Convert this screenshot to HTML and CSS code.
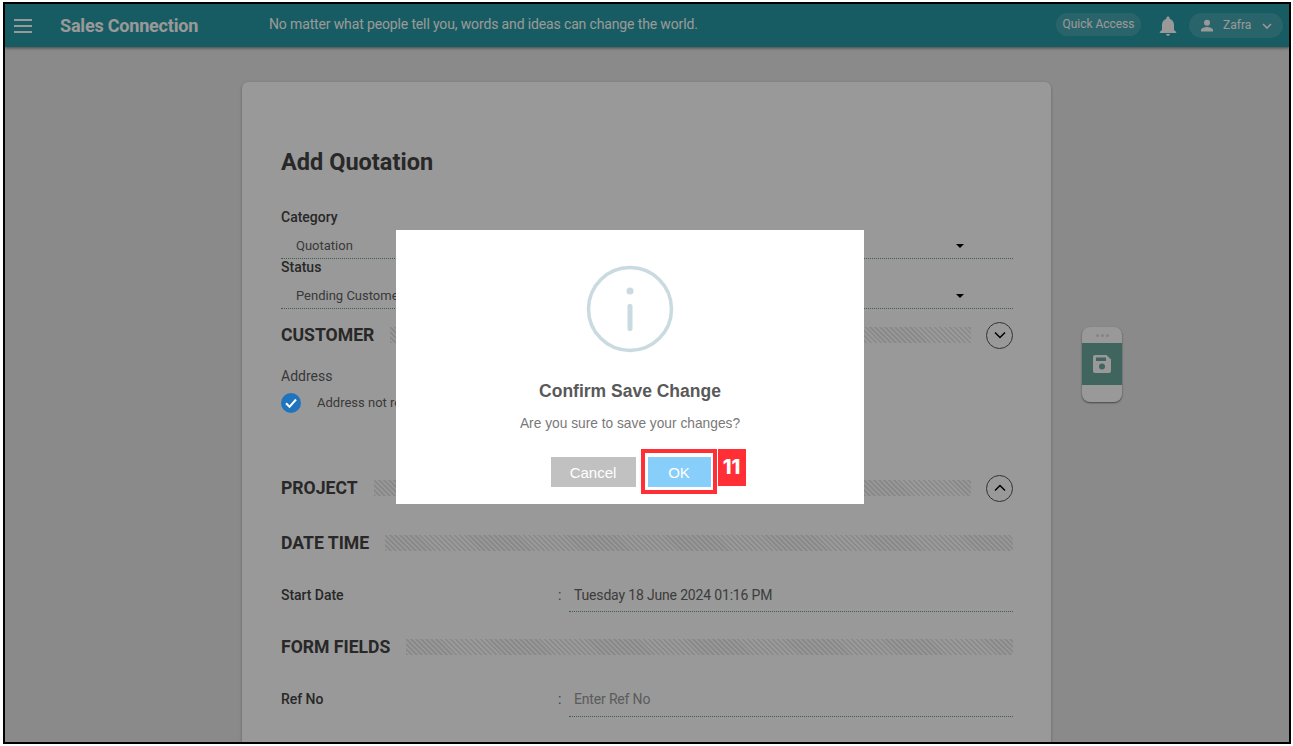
FILE: index.html
```html
<!DOCTYPE html>
<html lang="en">
<head>
<meta charset="utf-8">
<title>Add Quotation</title>
<link rel="stylesheet" href="styles.css">
</head>
<body>
<div class="frame">
  <header class="topbar">
    <svg class="menu-icon" width="18" height="14" viewBox="0 0 18 14"><path d="M0 1h18M0 7h18M0 13h18" stroke="#fff" stroke-width="2"/></svg>
    <div class="brand">Sales Connection</div>
    <div class="tagline">No matter what people tell you, words and ideas can change the world.</div>
    <div class="quick">Quick Access</div>
    <svg class="bell" width="18" height="20" viewBox="0 0 18 20"><path d="M9 0.5c-1 0-1.6.7-1.6 1.6v.6C4.700 3.500 3 5.900 3 8.700v5L.8 15.900V17h16.400v-1.100L15 13.700v-5c0-2.800-1.700-5.200-4.400-6v-.6C10.600 1.200 10 .5 9 .5zM7 18c0 1 .9 1.800 2 1.800s2-.8 2-1.800z" fill="#fff"/></svg>
    <div class="user">
      <svg width="14" height="14" viewBox="0 0 14 14"><circle cx="7" cy="3.800" r="3" fill="#fff"/><path d="M1 12.500v-1.400c0-2 4-3 6-3s6 1 6 3v1.400z" fill="#fff"/></svg>
      <span class="user-name">Zafra</span>
      <svg width="10" height="6" viewBox="0 0 10 6"><path d="M1 1l4 4 4-4" fill="none" stroke="#fff" stroke-width="1.600"/></svg>
    </div>
  </header>

  <main class="content">
    <section class="card">
      <h1 class="title">Add Quotation</h1>

      <div class="field-label">Category</div>
      <div class="select"><span>Quotation</span><i class="caret"></i></div>
      <div class="field-label">Status</div>
      <div class="select"><span>Pending Customer</span><i class="caret"></i></div>

      <div class="section sec-customer">
        <h2>CUSTOMER</h2><div class="hatch"></div>
        <div class="circle-btn"><svg width="12" height="8" viewBox="0 0 12 8"><path d="M1 1.500l5 5 5-5" fill="none" stroke="#000" stroke-width="1.500"/></svg></div>
      </div>
      <div class="address-label">Address</div>
      <div class="address-row">
        <svg class="check" width="20" height="20" viewBox="0 0 20 20"><circle cx="10" cy="10" r="10" fill="#1f74bd"/><path d="M5 10.300l3.500 3.500L15 6.500" fill="none" stroke="#fff" stroke-width="2"/></svg>
        <span class="address-text">Address not required</span>
      </div>

      <div class="section sec-project">
        <h2>PROJECT</h2><div class="hatch"></div>
        <div class="circle-btn"><svg width="12" height="8" viewBox="0 0 12 8"><path d="M1 6.500l5-5 5 5" fill="none" stroke="#000" stroke-width="1.500"/></svg></div>
      </div>
      <div class="section sec-date">
        <h2>DATE TIME</h2><div class="hatch"></div>
      </div>
      <div class="row row-date">
        <div class="row-label">Start Date</div><div class="colon">:</div>
        <div class="row-value">Tuesday 18 June 2024 01:16 PM</div>
      </div>
      <div class="section sec-form">
        <h2>FORM FIELDS</h2><div class="hatch"></div>
      </div>
      <div class="row row-ref">
        <div class="row-label">Ref No</div><div class="colon">:</div>
        <div class="row-value placeholder">Enter Ref No</div>
      </div>
    </section>

    <aside class="save-widget">
      <div class="dots"><i></i><i></i><i></i></div>
      <div class="save-band">
        <svg width="20" height="20" viewBox="0 0 20 20"><path d="M3 1h11.500L19 5.500V17a2 2 0 0 1-2 2H3a2 2 0 0 1-2-2V3a2 2 0 0 1 2-2z" fill="#fff"/><rect x="4" y="3.500" width="10" height="3.500" fill="#6ca89e"/><circle cx="10" cy="12.500" r="3" fill="#6ca89e"/></svg>
      </div>
    </aside>
  </main>

  <div class="overlay">
    <div class="dialog">
      <svg class="info" width="88" height="88" viewBox="0 0 88 88"><circle cx="44" cy="44" r="41.500" fill="none" stroke="#c9dae1" stroke-width="3.500"/><circle cx="44" cy="26" r="3.500" fill="#c9dae1"/><rect x="41.500" y="39" width="5" height="27" rx="2" fill="#c9dae1"/></svg>
      <h3 class="dialog-title">Confirm Save Change</h3>
      <p class="dialog-text">Are you sure to save your changes?</p>
      <div class="dialog-actions">
        <button class="btn btn-cancel">Cancel</button>
        <div class="highlight">
          <button class="btn btn-ok">OK</button>
          <span class="badge">11</span>
        </div>
      </div>
    </div>
  </div>
</div>
</body>
</html>
```

FILE: styles.css
```css
* { box-sizing: border-box; }
html, body { margin: 0; height: 100%; background: #fff; overflow: hidden; }
body { padding: 2px 2px 2px 3px; font-family: Roboto, sans-serif; }

.frame {
  position: relative;
  width: 1288px;
  height: 742px;
  border: 2px solid #000;
  background: #e6e6e6;
  overflow: hidden;
  display: flex;
  flex-direction: column;
}

/* Top bar */
.topbar {
  flex: none;
  height: 43px;
  background: #2699a3;
  display: flex;
  align-items: center;
  color: #fff;
  box-shadow: 0 1px 3px rgba(0,0,0,.5);
  position: relative;
}
.menu-icon { margin-left: 9px; flex: none; }
.brand { margin-left: 28px; font-size: 18px; font-weight: 700; letter-spacing: -0.2px; width: 209px; flex: none; }
.tagline { font-size: 14px; letter-spacing: -0.14px; flex: 1; padding-bottom: 3px; }
.quick {
  width: 85px; height: 23px; border-radius: 12px;
  background: rgba(255,255,255,.14);
  font-size: 12px; letter-spacing: -0.03px; display: flex; align-items: center; justify-content: center;
  flex: none; margin: 0 18px 2px 0; padding-bottom: 1px;
}
.bell { flex: none; margin-right: 12px; }
.user {
  width: 94px; height: 25px; border-radius: 13px;
  background: rgba(255,255,255,.14);
  display: flex; align-items: center; padding-left: 11px;
  flex: none; margin-right: 6px;
}
.user-name { font-size: 12px; margin: 0 9px 2px 9px; width: 30px; }

/* Main */
.content {
  flex: 1;
  min-height: 0;
  display: flex;
  justify-content: center;
  padding-top: 35px;
  position: relative;
}
.card {
  flex: none;
  width: 809px;
  height: 900px;
  margin-right: 1px;
  background: #fff;
  border-radius: 6px;
  box-shadow: 0 1px 3px rgba(0,0,0,.3);
  padding: 65px 38px 0 39px;
  color: #444;
}
.title { margin: 0 0 32px; font-size: 23.5px; line-height: 30px; font-weight: 700; letter-spacing: 0.02px; color: #444; }
.field-label { font-size: 14px; line-height: 16px; font-weight: 500; }
.select {
  height: 34px;
  padding: 8px 15px 0;
  font-size: 13px;
  line-height: 24px;
  display: flex;
  justify-content: space-between;
  align-items: center;
  border-bottom: 1px dotted #5f9f8b;
  color: #606060;
}
.caret { border: 4px solid transparent; border-top: 4px solid #000; border-bottom: 0; margin-right: 34px; }

.section { display: flex; align-items: center; height: 26px; }
.section h2 { margin: 0; font-size: 17.6px; font-weight: 700; line-height: 26px; flex: none; color: #444; }
.hatch {
  flex: 1;
  height: 16px;
  margin-left: 16px;
  background: repeating-linear-gradient(45deg, #e6e6e6 0 1.75px, #fff 1.75px 3.5px);
}
.circle-btn {
  flex: none;
  width: 27px; height: 27px;
  margin-left: 15px;
  border: 1px solid #555;
  border-radius: 50%;
  display: flex; align-items: center; justify-content: center;
}
.sec-customer { margin-top: 13px; }
.address-label { margin-top: 19px; font-size: 14px; line-height: 18px; color: #606060; }
.address-row { display: flex; align-items: center; gap: 16px; margin-top: 8px; font-size: 13px; color: #606060; height: 20px; }
.address-text { margin-bottom: 2px; }
.check { position: relative; z-index: 2; flex: none; }
.sec-project { margin-top: 62px; }
.sec-date { margin-top: 29px; }
.sec-form { margin-top: 22px; }

.row { display: flex; height: 33px; font-size: 14px; }
.row-date { margin-top: 23px; padding-top: 1px; }
.row-ref { margin-top: 24px; }
.row-label { width: 277px; flex: none; font-weight: 500; line-height: 22px; font-size: 14px; padding-top: 4px; letter-spacing: -0.05px; }
.colon { width: 11px; flex: none; line-height: 22px; padding-top: 4px; color: #666; }
.row-value {
  flex: 1;
  padding: 4px 5px 0;
  line-height: 22px;
  letter-spacing: -0.17px;
  border-bottom: 1px dotted #5f9f8b;
  color: #666;
}
.row-value.placeholder { color: #999; }

/* Floating save widget */
.save-widget {
  position: absolute;
  left: 1077px;
  top: 280px;
  width: 40px;
  height: 75px;
  border-radius: 8px;
  background: #fff;
  box-shadow: 0 1px 2px rgba(0,0,0,.5);
  overflow: hidden;
}
.dots { height: 16px; display: flex; justify-content: center; align-items: center; gap: 2px; }
.dots i { width: 3px; height: 3px; border-radius: 50%; background: #ddd; }
.save-band { height: 42px; background: #6ca89e; display: flex; align-items: center; justify-content: center; }

/* Dialog */
.overlay {
  position: absolute;
  inset: 0;
  z-index: 1;
  background: rgba(0,0,0,.4);
}
.dialog {
  position: absolute;
  left: 391px;
  top: 226px;
  width: 468px;
  height: 274px;
  background: #fff;
  display: flex;
  flex-direction: column;
  align-items: center;
  font-family: "Liberation Sans", Arial, sans-serif;
  padding-top: 35px;
}
.info { flex: none; }
.dialog-title { margin: 27px 0 0; font-size: 17.5px; line-height: 22px; font-weight: 700; color: #595959; }
.dialog-text { margin: 12px 0 0; font-size: 13.75px; line-height: 20px; color: #797979; }
.dialog-actions { display: flex; margin-top: 23px; margin-left: 7px; align-items: flex-start; }
.btn { border: 0; margin: 0; padding: 0; height: 30px; color: #fff; font: 15px "Liberation Sans", Arial, sans-serif; }
.btn-cancel { width: 85px; background: #c1c1c1; margin-right: 5px; }
.highlight { position: relative; margin-top: -8px; border: 4px solid #ff2f35; padding: 2px 2px 2px 3px; background: #fff; width: 76px; height: 45px; }
.btn-ok { display: block; width: 63px; height: 30px; background: #87cefa; margin-top: 2px; }
.badge {
  position: absolute;
  left: 73px;
  top: -4px;
  width: 28px;
  height: 37px;
  background: #ff2f35;
  color: #fff;
  font: 800 20px/36px Inter, sans-serif;
  text-align: center;
}
```
